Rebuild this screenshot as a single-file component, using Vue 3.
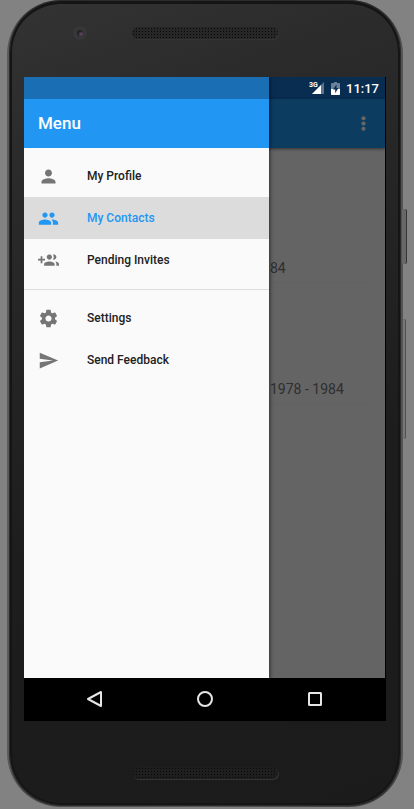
<script setup>
import { ref } from 'vue'

const active = ref('My Contacts')

const groups = [
  [
    {
      label: 'My Profile',
      path: 'M12 12c2.21 0 4-1.79 4-4s-1.79-4-4-4-4 1.79-4 4 1.79 4 4 4zm0 2c-2.67 0-8 1.34-8 4v2h16v-2c0-2.66-5.33-4-8-4z'
    },
    {
      label: 'My Contacts',
      path: 'M16 11c1.66 0 2.99-1.34 2.99-3S17.66 5 16 5s-3 1.34-3 3 1.34 3 3 3zm-8 0c1.66 0 2.99-1.34 2.99-3S9.66 5 8 5 5 6.34 5 8s1.34 3 3 3zm0 2c-2.33 0-7 1.17-7 3.5V19h14v-2.5C15 14.17 10.33 13 8 13zm8 0c-.29 0-.62.02-.97.05 1.16.84 1.97 1.97 1.97 3.45V19h6v-2.5c0-2.33-4.67-3.5-7-3.5z'
    },
    {
      label: 'Pending Invites',
      path: 'M8 10H5V7H3v3H0v2h3v3h2v-3h3v-2zm10 1c1.66 0 2.99-1.34 2.99-3S19.66 5 18 5c-.32 0-.63.05-.91.14.57.81.9 1.79.9 2.86s-.34 2.04-.9 2.86c.28.09.59.14.91.14zm-5 0c1.66 0 2.99-1.34 2.99-3S14.66 5 13 5s-3 1.34-3 3 1.34 3 3 3zm6.62 2.16c.83.73 1.38 1.66 1.38 2.84v2h3v-2c0-1.54-2.37-2.49-4.38-2.84zM13 13c-2 0-6 1-6 3v2h12v-2c0-2-4-3-6-3z'
    }
  ],
  [
    {
      label: 'Settings',
      path: 'M19.43 12.98c.04-.32.07-.64.07-.98s-.03-.66-.07-.98l2.11-1.65c.19-.15.24-.42.12-.64l-2-3.46c-.12-.22-.39-.3-.61-.22l-2.49 1c-.52-.4-1.08-.73-1.69-.98l-.38-2.65C14.46 2.18 14.25 2 14 2h-4c-.25 0-.46.18-.49.42l-.38 2.65c-.61.25-1.17.59-1.69.98l-2.49-1c-.23-.09-.49 0-.61.22l-2 3.46c-.13.22-.07.49.12.64l2.11 1.65c-.04.32-.07.65-.07.98s.03.66.07.98l-2.11 1.65c-.19.15-.24.42-.12.64l2 3.46c.12.22.39.3.61.22l2.49-1c.52.4 1.08.73 1.69.98l.38 2.65c.03.24.24.42.49.42h4c.25 0 .46-.18.49-.42l.38-2.65c.61-.25 1.17-.59 1.69-.98l2.49 1c.23.09.49 0 .61-.22l2-3.46c.12-.22.07-.49-.12-.64l-2.11-1.65zM12 15.5c-1.93 0-3.5-1.57-3.5-3.5s1.57-3.5 3.5-3.5 3.5 1.57 3.5 3.5-1.57 3.5-3.5 3.5z'
    },
    { label: 'Send Feedback', path: 'M2.01 21L23 12 2.01 3 2 10l15 2-15 2z' }
  ]
]

const rows = ['84', '1978 - 1984']
</script>

<template>
  <div class="stage">
    <div class="phone">
      <span class="side power"></span>
      <span class="side volume"></span>
      <div class="body">
        <div class="bezel top">
          <span class="camera"></span>
          <span class="speaker"></span>
        </div>

        <div class="screen">
          <div class="view">
            <main class="app">
              <div class="app-status"></div>
              <header class="toolbar">
                <button class="more" aria-label="More options">
                  <svg viewBox="0 0 24 24" width="21" height="21">
                    <circle cx="12" cy="6" r="2.4" />
                    <circle cx="12" cy="12" r="2.4" />
                    <circle cx="12" cy="18" r="2.4" />
                  </svg>
                </button>
              </header>
              <ul class="list">
                <li v-for="row in rows" :key="row">{{ row }}</li>
              </ul>
            </main>
            <div class="scrim"></div>
            <aside class="drawer">
              <div class="drawer-status"></div>
              <h1>Menu</h1>
              <nav>
                <div v-for="(group, g) in groups" :key="g" class="group">
                  <button
                    v-for="item in group"
                    :key="item.label"
                    class="item"
                    :class="{ active: item.label === active }"
                    @click="active = item.label"
                  >
                    <svg viewBox="0 0 24 24" width="21" height="21"><path :d="item.path" /></svg>
                    <span>{{ item.label }}</span>
                  </button>
                </div>
              </nav>
            </aside>
            <div class="system">
              <svg class="signal" viewBox="0 0 16 14" width="16" height="14">
                <path d="M15 1v12H3z" fill="#5d7590" />
                <path d="M12 4v9H3z" fill="#fff" />
                <text x="0" y="6">3G</text>
              </svg>
              <svg viewBox="0 0 9 13" width="9" height="13">
                <path d="M3 0h3v1h2q1 0 1 1v10q0 1-1 1H1q-1 0-1-1V2q0-1 1-1h2z" fill="#6b819a" />
                <path d="M0 7h9v5q0 1-1 1H1q-1 0-1-1z" fill="#fff" />
                <path d="M5.5 2.5L2 7.6h2.2v3.6L7.3 6H5.5z" fill="#0a2c50" />
              </svg>
              <time>11:17</time>
            </div>
          </div>

          <div class="navbar">
            <button aria-label="Back">
              <svg viewBox="0 0 18 18" width="18" height="18"><path d="M15 2v14L2 9z" /></svg>
            </button>
            <button aria-label="Home">
              <svg viewBox="0 0 18 18" width="18" height="18"><circle cx="9" cy="9" r="7" /></svg>
            </button>
            <button aria-label="Recent apps">
              <svg viewBox="0 0 18 18" width="18" height="18"><rect x="3" y="3" width="12" height="12" rx="0.5" /></svg>
            </button>
          </div>
        </div>

        <div class="bezel bottom"><span class="speaker"></span></div>
      </div>
    </div>
  </div>
</template>

<style>
body {
  margin: 0;
  background: #828282;
}
</style>

<style scoped>
.stage {
  padding: 0 11px 3px 7px;
  font-family: Roboto, sans-serif;
  overflow: hidden;
}
.phone {
  position: relative;
  padding: 1px 3px 2px;
  border-radius: 54px;
  background: linear-gradient(90deg, #5c5c5c, #4a4a4a 4%, #555 50%, #3c3a3b 96%, #565455);
}
.side {
  position: absolute;
  box-sizing: border-box;
  border-radius: 0 2px 2px 0;
}
.power {
  top: 209px;
  right: -4px;
  width: 5px;
  height: 55px;
  background: #686868;
  border-right: 1px solid #333;
}
.volume {
  top: 319px;
  right: -3px;
  width: 3px;
  height: 120px;
  background: #777;
  border-right: 1px solid #505050;
}
.body {
  padding: 0 12px;
  border: 2px solid #151515;
  border-top-width: 3px;
  border-radius: 51px;
  background: linear-gradient(160deg, #333334, #2b2b2b 16%, #1d1d1e 60%, #1b1b1b);
  box-shadow: 0 0 0 1px #2b2b2b;
}
.bezel {
  display: grid;
  grid-template-columns: 1fr 146px 1fr;
  align-items: center;
}
.top {
  height: 58px;
  padding-bottom: 15px;
}
.bottom {
  height: 61px;
  padding-top: 21px;
}
.camera {
  width: 6px;
  height: 6px;
  margin-left: 49px;
  border: 4px solid #373738;
  border-radius: 50%;
  background: radial-gradient(circle at 70% 70%, #725064, #211d2c 55%);
}
.speaker {
  grid-column: 2;
  height: 12px;
  border-radius: 6px;
  background: radial-gradient(circle, #0a0a0a 1px, transparent 1px) 0 0 / 3px 3px, #262626;
  box-shadow: 1px 1px 0 #343434;
}
.bottom .speaker {
  background-color: #1e1e1e;
}
.screen {
  background: #000;
}
.view {
  display: grid;
  height: 601px;
  margin-right: 1px;
  overflow: hidden;
}
.view > * {
  grid-area: 1 / 1;
}
.app {
  background: #fafafa;
}
.app-status {
  height: 22px;
  background: #1870cb;
}
.toolbar {
  display: flex;
  justify-content: flex-end;
  align-items: center;
  height: 49px;
  padding-right: 11px;
  background: #2196f3;
  box-shadow: 0 1px 3px rgba(0, 0, 0, 0.5);
}
button {
  padding: 0;
  border: 0;
  background: none;
  font: inherit;
  color: inherit;
}
.more {
  display: flex;
  fill: #fff;
}
.list {
  margin: 0;
  padding: 14px 15px 0 0;
  list-style: none;
}
.list li {
  display: flex;
  align-items: flex-end;
  height: 120px;
  padding-left: 246px;
  border-bottom: 1px solid #f2f2f2;
  color: #757575;
  font-size: 14px;
  line-height: 28px;
}
.scrim {
  background: rgba(0, 0, 0, 0.6);
}
.drawer {
  width: 245px;
  background: #fafafa;
  box-shadow: 0 0 4px 1px rgba(0, 0, 0, 0.55);
}
.drawer-status {
  height: 22px;
  background: #196eb4;
}
h1 {
  margin: 0;
  padding-left: 14px;
  background: #2196f3;
  color: #fff;
  font-size: 17px;
  font-weight: 500;
  line-height: 49px;
}
.group {
  padding: 7px 0 8px;
}
.group + .group {
  border-top: 1px solid #dedede;
}
.item {
  display: flex;
  align-items: center;
  gap: 28px;
  width: 100%;
  height: 42px;
  padding-left: 14px;
  color: #212121;
  font-size: 12px;
  font-weight: 500;
}
.item svg {
  fill: #757575;
}
.active {
  background: #dcdcdc;
  color: #2196f3;
}
.active svg {
  fill: #2196f3;
}
.system {
  display: flex;
  justify-self: end;
  align-items: center;
  gap: 6px;
  height: 22px;
  padding-right: 6px;
  color: #fff;
  font-size: 13px;
  font-weight: 500;
}
.signal text {
  fill: #fff;
  font-size: 7px;
  font-weight: 700;
}
.navbar {
  display: flex;
  justify-content: center;
  gap: 92px;
  height: 43px;
}
.navbar button {
  display: flex;
  align-items: center;
  height: 41px;
}
.navbar svg {
  fill: none;
  stroke: #e6e6e6;
  stroke-width: 2;
  stroke-linejoin: round;
}
</style>
